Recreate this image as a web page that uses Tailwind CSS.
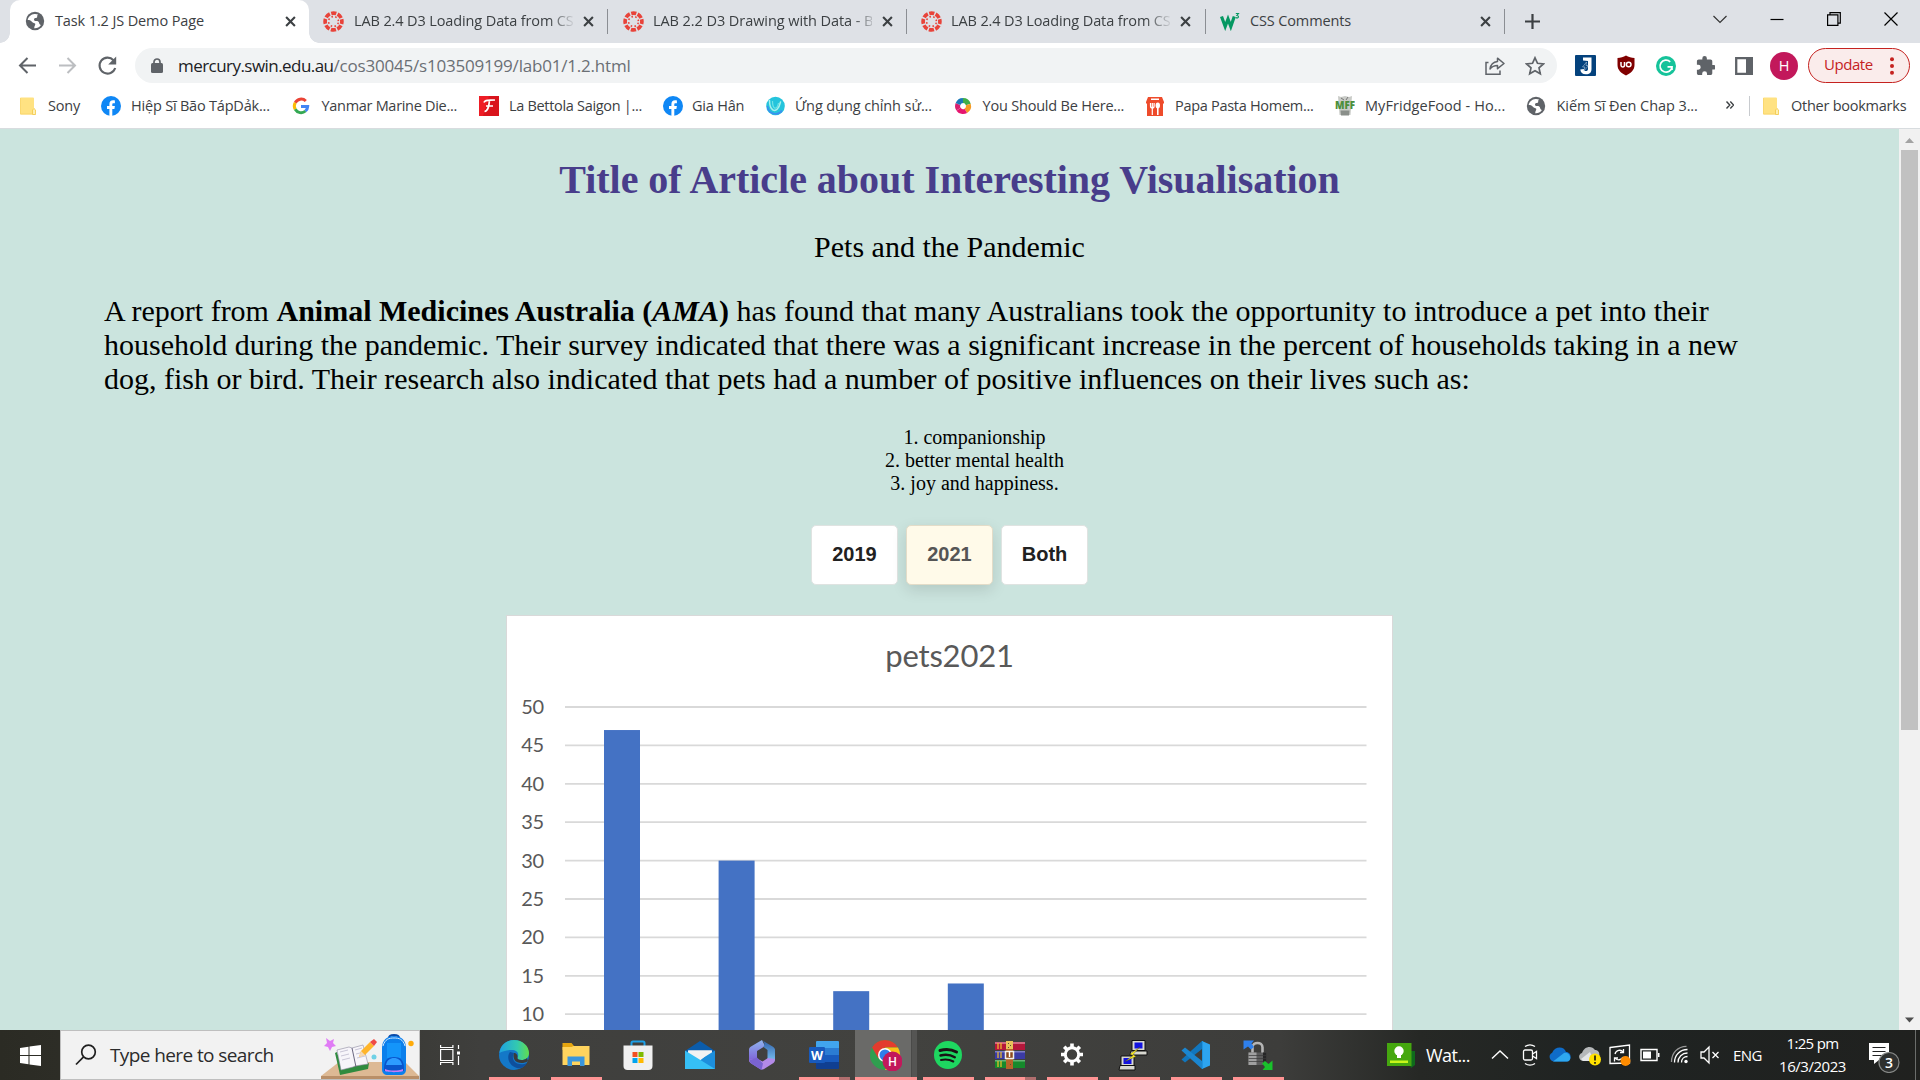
<!DOCTYPE html>
<html lang="en">
<head>
<meta charset="utf-8">
<title>Task 1.2 JS Demo Page</title>
<script src="https://cdn.jsdelivr.net/npm/@tailwindcss/browser@4"></script>
</head>
<body class="w-[1920px] h-[1080px] overflow-hidden bg-white font-['Open_Sans',sans-serif]">

<!-- shared icons -->
<svg class="hidden">
  <symbol id="globe" viewBox="0 0 20 20"><circle cx="10" cy="10" r="9.2" fill="#5f6368"/><path d="M9.5 2.9C6 3.2 3.2 5.6 2.7 9c2.300 0 3.300.6 4.300 1.900 1 1.200 2.600.6 3.200 1.800.5 1.200-.9 1.700-1 4.500 2.600.2 5.300-.9 6.700-3.300-1-.3-1.500-.9-1.800-2-.3-1.300-1.200-1.800-3-1.800-1.300 0-2.200-.6-2.100-1.900.1-1.100 1-1.300 2-1.300 1.300 0 1.300-1 1.200-1.700-.1-.8.400-1.300 1-1.700-1.100-.5-2.400-.700-3.700-.6Z" fill="#fff"/></symbol>
  <symbol id="canvas" viewBox="0 0 20 20"><g fill="none" stroke="#e8433a"><circle cx="10" cy="10" r="8" stroke-width="3.500" stroke-dasharray="4.900 1.383" stroke-dashoffset="2.450"/><circle cx="10" cy="10" r="4.700" stroke-width="1.500" stroke-dasharray="1.500 2.191" stroke-dashoffset="2.600"/></g></symbol>
  <symbol id="close" viewBox="0 0 10 10"><path d="M1 1l8 8M9 1l-8 8" stroke="#3c4043" stroke-width="1.900" fill="none"/></symbol>
  <symbol id="fb" viewBox="0 0 20 20"><circle cx="10" cy="10" r="10" fill="#0f87f5"/><path d="M8.400 20v-6.900H6v-3h2.400V8.300c0-2.700 1.300-4 3.700-4 .9 0 1.400.1 1.800.2v2.700h-1.300c-1 0-1.300.5-1.300 1.400v1.500h2.600l-.5 3h-2.100V20Z" fill="#fff"/></symbol>
  <symbol id="folder" viewBox="0 0 16 18"><path d="M1 .5h12a1 1 0 0 1 1 1V12l1.500 1v3.500a1 1 0 0 1-1 1H1a1 1 0 0 1-1-1v-15a1 1 0 0 1 1-1Z" fill="#ffe282"/><path d="M12.500 17.500v-4.500l1.500-1.500 1.600 1.500v4.500Z" fill="#fff0b3" stroke="#f2c744" stroke-width=".8"/><path d="M.4 1v16h12" fill="none" stroke="#f8d368" stroke-width=".8"/></symbol>
</svg>

<!-- tab strip -->
<header class="flex h-[43px] bg-[#dee1e6] pl-[10px] text-[14.5px] text-[#3c4043]">
  <div class="relative flex w-[299px] items-center rounded-t-[10px] bg-white pl-[15px] pb-px">
    <span class="absolute bottom-0 -left-[10px] h-[10px] w-[10px] bg-[radial-gradient(circle_at_0_0,#dee1e6_9.500px,#fff_10px)]"></span>
    <span class="absolute bottom-0 -right-[10px] h-[10px] w-[10px] bg-[radial-gradient(circle_at_100%_0,#dee1e6_9.500px,#fff_10px)]"></span>
    <svg class="size-5"><use href="#globe"/></svg>
    <span class="ml-[10px] w-[219px] whitespace-nowrap tracking-[-0.118px]">Task 1.2 JS Demo Page</span>
    <svg class="ml-[10.500px] size-[11px]"><use href="#close"/></svg>
  </div>
  <div class="flex w-[299px] items-center pl-[15px] pb-px">
    <svg class="-ml-px size-[21px]"><use href="#canvas"/></svg>
    <span class="ml-[10px] w-[219px] overflow-hidden whitespace-nowrap tracking-[-0.12px] mask-[linear-gradient(to_right,#000_195px,transparent_222px)]">LAB 2.4 D3 Loading Data from CSV</span>
    <svg class="ml-[10px] size-[11px]"><use href="#close"/></svg>
    <span class="ml-auto h-[25px] w-px bg-[#8b8e93]"></span>
  </div>
  <div class="flex w-[299px] items-center pl-[15px] pb-px">
    <svg class="size-[21px]"><use href="#canvas"/></svg>
    <span class="ml-[9px] w-[219px] overflow-hidden whitespace-nowrap tracking-[-0.07px] mask-[linear-gradient(to_right,#000_201px,transparent_224px)]">LAB 2.2 D3 Drawing with Data - Bar</span>
    <svg class="ml-[10px] size-[11px]"><use href="#close"/></svg>
    <span class="ml-auto h-[25px] w-px bg-[#8b8e93]"></span>
  </div>
  <div class="flex w-[299px] items-center pl-[14px] pb-px">
    <svg class="size-[21px]"><use href="#canvas"/></svg>
    <span class="ml-[9px] w-[219px] overflow-hidden whitespace-nowrap tracking-[-0.12px] mask-[linear-gradient(to_right,#000_195px,transparent_222px)]">LAB 2.4 D3 Loading Data from CSV</span>
    <svg class="ml-[10px] size-[11px]"><use href="#close"/></svg>
    <span class="ml-auto h-[25px] w-px bg-[#8b8e93]"></span>
  </div>
  <div class="flex w-[299px] items-center pl-[14px] pb-px">
    <svg class="size-5" viewBox="0 0 20 20" fill="none" stroke="#059862"><path d="M1.500 5.500l3.700 10L8 8l2.800 7.500 3.500-10" stroke-width="3.200"/><path d="M15.800 2.500h2.700l-1.600 2c1.100 0 1.600.5 1.600 1.300 0 1.100-1.500 1.500-2.700.7" stroke-width="1.100"/></svg>
    <span class="ml-[10px] w-[219px] whitespace-nowrap tracking-[-0.135px]">CSS Comments</span>
    <svg class="ml-[10.500px] size-[11px]"><use href="#close"/></svg>
    <span class="ml-auto h-[25px] w-px bg-[#8b8e93]"></span>
  </div>
  <svg class="mt-[14px] ml-[20px] size-[15px]" viewBox="0 0 15 15" stroke="#3c4043" stroke-width="2.200"><path d="M7.500 0v15M0 7.500h15"/></svg>
  <div class="ml-auto flex items-center gap-[43px] pr-[22px] pb-[6px] text-black">
    <svg class="h-[14px] w-[14px]" viewBox="0 0 14 14" fill="none" stroke="#333" stroke-width="1.200"><path d="M.5 4L7 10.500 13.500 4"/></svg>
    <svg class="h-[14px] w-[14px]" viewBox="0 0 14 14" stroke="#000" stroke-width="1.200"><path d="M.5 7.500h13"/></svg>
    <svg class="h-[14px] w-[14px]" viewBox="0 0 14 14" fill="none" stroke="#000" stroke-width="1.200"><path d="M.6 2.800h10.300v10.500H.6zM3 2.600V.6h10.300v10.500H11"/></svg>
    <svg class="h-[14px] w-[14px]" viewBox="0 0 14 14" stroke="#000" stroke-width="1.200"><path d="M.5.5l13 13M13.500.5l-13 13"/></svg>
  </div>
</header>

<!-- toolbar -->
<nav class="flex h-[45px] items-center pl-[17px] pr-[10px]">
  <svg class="size-[21px]" viewBox="0 0 21 21" fill="none" stroke="#5f6368" stroke-width="2"><path d="M19 10.500H3M10.500 3L3 10.500l7.500 7.500"/></svg>
  <svg class="ml-[19px] size-[21px]" viewBox="0 0 21 21" fill="none" stroke="#bcbec1" stroke-width="2"><path d="M2 10.500h16M10.500 3l7.500 7.500-7.500 7.500"/></svg>
  <svg class="ml-[19px] size-[21px]" viewBox="0 0 21 21"><path d="M16.500 5.200A8 8 0 1 0 18.200 13" fill="none" stroke="#5f6368" stroke-width="2.100"/><path d="M19.200 1.500v8h-8z" fill="#5f6368"/></svg>
  <div class="ml-[17px] flex h-[35px] w-[1422px] items-center rounded-full bg-[#f1f3f4] pl-[16px] text-[17px]">
    <svg class="h-[15px] w-[12px]" viewBox="0 0 12 15"><rect y="5" width="12" height="10" rx="1.500" fill="#5f6368"/><path d="M3 6V4a3 3 0 0 1 6 0v2" fill="none" stroke="#5f6368" stroke-width="1.700"/></svg>
    <span class="ml-[15px] whitespace-nowrap text-[#202124] tracking-[-0.548px]">mercury.swin.edu.au</span><span class="whitespace-nowrap text-[#6b6f74] tracking-[-0.2px]">/cos30045/s103509199/lab01/1.2.html</span>
    <svg class="ml-auto h-[18px] w-[20px]" viewBox="0 0 20 18" fill="none" stroke="#5f6368" stroke-width="1.500"><path d="M3.500 5.500H1v11.700h14v-3.700"/><path d="M12.500 1.200L19 6.500l-6.500 5.200V8.500c-3.500 0-5.700 1.200-7.500 3.500.6-4.200 3-7 7.500-7.500z" stroke-linejoin="round"/></svg>
    <svg class="ml-[20px] mr-[12px] size-[20px]" viewBox="0 0 20 20" fill="none" stroke="#5f6368" stroke-width="1.700"><path d="M10 1.800l2.500 5.500 6 .6-4.500 4 1.300 5.900L10 14.700l-5.300 3.100L6 11.900l-4.500-4 6-.6z"/></svg>
  </div>
  <svg class="ml-[18px] size-[21px]" viewBox="0 0 21 21"><rect width="21" height="21" rx="1" fill="#04427d"/><path d="M8 2.500l8.500 0V14c0 3.700-1.800 5.200-5.600 5.200-3.500 0-5.400-1.700-5.600-4.800l3.500-.5c0 1.500.7 2.100 2 2.100 1.500 0 2.200-.8 2.200-2.300V6L8 5.500z" fill="#fff"/><path d="M11.500 7l-4 5h2.500l-1.500 4.500 5-6H11z" fill="#04427d" stroke="#fff" stroke-width=".4"/></svg>
  <svg class="ml-[21px] h-[21px] w-[18px]" viewBox="0 0 18 21"><path d="M9 .5c2.500 1.400 5.500 2.300 8.500 2.500v7c0 5-3.500 8-8.500 10.500C4 18 .5 15 .5 10V3C3.500 2.800 6.500 1.900 9 .5z" fill="#800000"/><g fill="none" stroke="#fff" stroke-width="1.500"><path d="M4 7v3.200c0 1.100.6 1.700 1.700 1.700s1.800-.6 1.800-1.700V7"/><circle cx="11.700" cy="9.500" r="2.300"/></g></svg>
  <svg class="ml-[20.500px] size-[20px]" viewBox="0 0 20 20"><circle cx="10" cy="10" r="10" fill="#15c39a"/><path d="M14.200 5.800A6 6 0 1 0 16 10.800H11.500M13.300 10.800H16V14" fill="none" stroke="#fff" stroke-width="1.700"/></svg>
  <svg class="ml-[20.500px] size-[19px]" viewBox="1 1 21 21"><path fill="#5f6368" d="M20.500 11H19V7c0-1.100-.9-2-2-2h-4V3.500a2.500 2.500 0 0 0-5 0V5H4c-1.100 0-2 .9-2 2v3.800h1.500a2.700 2.700 0 0 1 0 5.400H2V20c0 1.100.9 2 2 2h3.800v-1.500a2.700 2.700 0 0 1 5.400 0V22H17c1.100 0 2-.9 2-2v-4h1.500a2.500 2.500 0 0 0 0-5z"/></svg>
  <svg class="ml-[20px] size-[18px]" viewBox="0 0 18 18"><path d="M1.200 1.200h15.600v15.600H1.200z" fill="none" stroke="#5f6368" stroke-width="2.300"/><path d="M11 0h7v18h-7z" fill="#5f6368"/></svg>
  <span class="ml-[17px] flex size-[28px] items-center justify-center rounded-full bg-[#c2185b] text-[14.5px] text-white">H</span>
  <span class="ml-auto flex h-[35px] w-[102px] items-center justify-between rounded-full border-[1.500px] border-[#c5221f] bg-[#faeceb] pl-[15px] pr-[15px] text-[15px] text-[#c5221f]"><span class="-mt-[2px] tracking-[-0.45px]">Update</span>
    <svg class="h-[18px] w-[4px]" viewBox="0 0 4 18" fill="#c5221f"><circle cx="2" cy="2.200" r="2"/><circle cx="2" cy="9" r="2"/><circle cx="2" cy="15.800" r="2"/></svg>
  </span>
</nav>

<!-- bookmarks bar -->
<nav class="flex h-[41px] items-center border-b border-[#d8dcdf] pb-[4px] pl-[17.5px] text-[14.5px] whitespace-nowrap text-[#3c4043]">
  <div class="flex w-[83px] items-center gap-[10.500px]"><svg class="h-[18px] w-5" viewBox="0 0 20 18"><use href="#folder" x="2" width="16" height="18"/></svg><span class="tracking-[-0.2px]">Sony</span></div>
  <div class="flex w-[190.500px] items-center gap-[10.500px]"><svg class="size-5"><use href="#fb"/></svg><span class="tracking-[-0.2px]">Hiệp Sĩ Bão TápDảk...</span></div>
  <div class="flex w-[187.500px] items-center gap-[10.500px]"><svg class="size-5" viewBox="0 0 20 20" fill="none" stroke-width="3"><path d="M14.800 5A6.700 6.700 0 0 0 4.200 6.700" stroke="#ea4335"/><path d="M4.200 6.700a6.700 6.700 0 0 0 0 6.600" stroke="#fbbc05"/><path d="M4.200 13.300A6.700 6.700 0 0 0 14.500 15" stroke="#34a853"/><path d="M14.500 15a6.700 6.700 0 0 0 2.200-4.600H10" stroke="#4285f4"/></svg><span class="tracking-[-0.3px]">Yanmar Marine Die...</span></div>
  <div class="flex w-[184px] items-center gap-[10.500px]"><svg class="size-5" viewBox="0 0 20 20"><path d="M0 0h20v20H0z" fill="#d9141c"/><path d="M0 0h10L4 20H0z" fill="#ee1c25"/><path d="M5 6.500C6 3.500 9 4.500 16 4M10.500 4.500C10 9 9.500 15 5.500 15.500M7 10h7" fill="none" stroke="#fff" stroke-width="1.700"/></svg><span class="tracking-[-0.308px]">La Bettola Saigon |...</span></div>
  <div class="flex w-[103px] items-center gap-[9.500px]"><svg class="size-5"><use href="#fb"/></svg><span class="tracking-[-0.2px]">Gia Hân</span></div>
  <div class="flex w-[187px] items-center gap-[9.500px]"><svg class="size-5" viewBox="0 0 20 20"><circle cx="9.500" cy="10" r="9.300" fill="#24c4dc"/><path d="M1.500 10a8 8 0 0 0 14.500 4.500" fill="none" stroke="#3d8df0" stroke-width="1.500"/><path d="M3.500 4.500c0 4 1 8 3.500 9.500 3 1.500 6-1.500 7.500-8" fill="none" stroke="#a9f0ec" stroke-width="1.500" stroke-linecap="round"/><path d="M6.500 5c0 3 .5 6 2 7 2 1 3.500-2 4-5" fill="none" stroke="#6fe3e6" stroke-width="1.200"/></svg><span class="tracking-[-0.1px]">Ứng dụng chỉnh sử...</span></div>
  <div class="flex w-[192px] items-center gap-[10px]"><svg class="size-5" viewBox="0 0 20 20" fill="none" stroke-width="5"><path d="M10 4.500A5.500 5.500 0 0 1 15.300 8.500" stroke="#3fae49"/><path d="M15.300 8.500A5.500 5.500 0 0 1 12.800 14.800" stroke="#f59a23"/><path d="M12.800 14.800A5.500 5.500 0 0 1 5.500 13.200" stroke="#e6156f"/><path d="M5.500 13.200A5.500 5.500 0 0 1 5 8" stroke="#d9206f"/><path d="M5 8A5.500 5.500 0 0 1 10 4.500" stroke="#1a78b8"/></svg><span class="tracking-[-0.2px]">You Should Be Here...</span></div>
  <div class="flex w-[190px] items-center gap-[10.500px]"><svg class="size-5" viewBox="0 0 20 20"><path d="M3 1h14l2 5v1.500h-1V20H2V7.500H1V6z" fill="#ee4b2b"/><path d="M6 2.500h8v1.500H6z" fill="#fff"/><path d="M5.500 7v3c0 1.500 1 2 1.800 2s1.800-.5 1.800-2V7M7.300 7v12" stroke="#fff" stroke-width="1.200" fill="none"/><ellipse cx="12.800" cy="9.500" rx="2.200" ry="3" fill="#fff"/><path d="M12.800 10v9" stroke="#fff" stroke-width="1.600"/></svg><span class="tracking-[-0.29px]">Papa Pasta Homem...</span></div>
  <div class="flex w-[191.500px] items-center gap-[10.500px]"><svg class="size-5" viewBox="0 0 20 20"><path d="M3 0l3 1 4-1 4 1 3-1-1.500 19h-11z" fill="#c9cbc7"/><path d="M5.500 14.500h9l-.5 5H6z" fill="#8a8f8a"/><path d="M6 2l3 2M13 1l-2 3" stroke="#777" stroke-width="1"/><text x="10" y="13.200" text-anchor="middle" textLength="20" lengthAdjust="spacingAndGlyphs" font-size="10" font-weight="800" fill="#4c8f3c">MFF</text></svg><span class="tracking-[0.06px]">MyFridgeFood - Ho...</span></div>
  <div class="flex w-[197.500px] items-center gap-[10.500px]"><svg class="size-5"><use href="#globe"/></svg><span class="tracking-[-0.08px]">Kiếm Sĩ Đen Chap 3...</span></div>
  <svg class="size-[10px] mt-[-2px]" viewBox="0 0 10 10" fill="none" stroke="#3c4043" stroke-width="1.400"><path d="M2.500 1.500L5.800 5 2.500 8.500M6.300 1.500L9.600 5 6.300 8.500"/></svg>
  <span class="ml-[15px] h-5 w-px bg-[#c8cbcf]"></span>
  <div class="ml-[11px] flex items-center gap-[10.500px]"><svg class="h-[18px] w-5" viewBox="0 0 20 18"><use href="#folder" x="2" width="16" height="18"/></svg><span class="tracking-[-0.25px]">Other bookmarks</span></div>
</nav>

<!-- page viewport -->
<div class="flex h-[901px] overflow-hidden">
  <main class="flex h-full w-[1899px] flex-col items-center overflow-hidden bg-[#cbe4de] pt-[28px] font-['Liberation_Serif',serif] text-black">
    <h1 class="text-[40px] leading-[46px] font-bold tracking-[-0.03px] text-[#483d8b]">Title of Article about Interesting Visualisation</h1>
    <p class="mt-[27px] text-[30px] leading-[34px]">Pets and the Pandemic</p>
    <p class="mt-[30px] w-[1691px] text-[30px] leading-[34px]">A report from <b>Animal Medicines Australia (<i>AMA</i>)</b> has found that many Australians took the opportunity to introduce a pet into their household during the pandemic. Their survey indicated that there was a significant increase in the percent of households taking in a new dog, fish or bird. Their research also indicated that pets had a number of positive influences on their lives such as:</p>
    <ol class="mt-[30px] list-inside list-decimal pl-[50px] text-center text-[20px] leading-[23px]">
      <li>companionship</li>
      <li>better mental health</li>
      <li>joy and happiness.</li>
    </ol>
    <div class="mt-[30px] flex gap-[8px] font-['Liberation_Sans',sans-serif] text-[20px] font-bold text-[#212121]">
      <button class="h-[60px] w-[87px] rounded-[5px] border border-[#dfe3e1] bg-white pb-[3px]">2019</button>
      <button class="h-[60px] w-[87px] rounded-[5px] border border-[#e3dcc8] bg-[#fffae9] pb-[3px] text-[#555] shadow-[0_5px_15px_rgba(0,0,0,0.120)]">2021</button>
      <button class="h-[60px] w-[87px] rounded-[5px] border border-[#dfe3e1] bg-white pb-[3px]">Both</button>
    </div>
    <svg id="chart" class="mt-[30px] h-[560px] w-[887px] shrink-0 border border-[#d9d9d9] bg-white font-['Lato',sans-serif]" viewBox="507 616 885 558" fill="#595959"></svg>
  </main>
  <aside class="flex w-[21px] flex-col items-center bg-[#f1f1f1]">
    <svg class="h-[21px] w-[21px]" viewBox="0 0 21 21"><path d="M6 14l4.500-5 4.500 5z" fill="#a3a3a3"/></svg>
    <div class="h-[580px] w-[17px] bg-[#c1c1c1]"></div>
    <svg class="mt-auto h-[21px] w-[21px]" viewBox="0 0 21 21"><path d="M6 8.500l4.500 5 4.500-5z" fill="#505050"/></svg>
  </aside>
</div>

<!-- taskbar -->
<footer class="flex h-[50px] bg-[linear-gradient(to_right,#2b2b24_0,#35352f_300px,#3f3f3d_480px,#42423f_900px,#3d3d3b_1280px,#262825_1420px,#1f2322_1600px,#20211f_1920px)] text-white">
  <div class="flex w-[60px] items-center pl-[20px]">
    <svg class="size-[21px]" viewBox="0 0 21 21" fill="#fff"><path d="M0 3l8.500-1.200v8.200H0zM9.500 1.600L21 0v10H9.500zM0 11h8.500v8.200L0 18zM9.500 11H21v10L9.500 19.400z"/></svg>
  </div>
  <div class="flex w-[360px] items-center border border-[#bfbfbf] bg-[#f2f2f2] pl-[14px]">
    <svg class="size-[22px]" viewBox="0 0 22 22" fill="none" stroke="#1f1f1f" stroke-width="1.700"><circle cx="13.500" cy="8" r="6.800"/><path d="M8.600 12.800L1 20.500"/></svg>
    <span class="ml-[13px] text-[19px] tracking-[-0.6px] whitespace-nowrap text-[#2b2b2b]">Type here to search</span>
    <svg class="ml-auto h-[48px] w-[98px]" viewBox="12 1 98 48">
      <path d="M30 32h66l14 14H12z" fill="#ddb994"/><path d="M12 46h98v3H12z" fill="#b98f68"/>
      <path d="M17 8l4 3 4-2-1 4 3 3-4 1-2 4-2-4-4-1 3-3z" fill="#e07bf5"/><circle cx="102" cy="13.500" r="2.700" fill="#ffab0a"/><circle cx="65" cy="27" r="2.500" fill="#6fd1e6"/>
      <path d="M26 23l5 22 28-6 1-6-27 6-5-17z" fill="#2f8b3e"/><path d="M28 20l12-3 3 1 11-3 5 19-13 2-2 1-12 3z" fill="#f7f5fa" stroke="#8d8aa0" stroke-width=".6"/><path d="M43 18l4 19" stroke="#6a6780" stroke-width="1"/><path d="M31 22l8-2M32 26l8-2M33 30l8-2M46 20l7-2M47 24l8-2M48 28l8-2" stroke="#c9c6d6" stroke-width="1"/>
      <path d="M50 27l2-6 9-9 4 4-9 9z" fill="#ffb52b"/><path d="M61 12l4 4 3-4-3-3z" fill="#ef4b45"/><path d="M50 27l2-6 4 4z" fill="#f5d9b5"/>
      <path d="M80 8c0-4 10-4 10 0" fill="none" stroke="#0a4aa8" stroke-width="2"/><path d="M73 18c0-8 5-12 12-12s12 4 12 12v21c0 4-2 6-6 6H79c-4 0-6-2-6-6z" fill="#0b7fec"/><path d="M74 16c2-7 6-8 11-8s9 1 11 8" fill="none" stroke="#cfe7ff" stroke-width="1"/><path d="M78 13h14v15H78z" fill="#1495fa"/><path d="M75 38c0-8 4-11 10-11s10 3 10 11v3H75z" fill="#0a55cc"/><path d="M77 35c1-5 4-7 8-7s7 2 8 7z" fill="#2d9bff"/><path d="M76 39c5 2 13 2 18 0v2c-2 1.500-16 1.500-18 0z" fill="#c77df5"/>
    </svg>
  </div>
  <div class="flex w-[63.500px] items-center justify-center pr-[4px]">
    <svg class="h-5 w-5" viewBox="0 0 20 20" fill="none" stroke="#fff" stroke-width="1.200"><path d="M.6 4.500h12.300v11H.6zM.6 0v2.500h12.300V0M.6 20v-2.500h12.300V20M18.500 0v4M18.500 11v9"/><path d="M17 6.500h3v3h-3z" fill="#fff" stroke="none"/></svg>
  </div>
  <div class="grid w-[805.500px] grid-cols-13 [&>div]:flex [&>div]:flex-col [&>div]:items-center [&>div]:justify-between [&>div>svg]:size-[32px] [&>div>svg]:mt-[9px] [&>div>svg]:-ml-px [&>div>i]:h-[3px] [&>div>i]:w-[51px] [&>div>i]:bg-[#ff9494]">
    <div><svg viewBox="0 0 32 32"><defs><linearGradient id="eg" x1="0" x2="1"><stop offset="0" stop-color="#1fa2e0"/><stop offset=".6" stop-color="#33c9b0"/><stop offset="1" stop-color="#62de4d"/></linearGradient></defs><circle cx="16" cy="16" r="15" fill="#1478c8"/><path d="M1.500 14C2 6.500 8 1 16 1c8.500 0 15 6 15 13 0 5-4 7-7.500 7-3 0-4.500-1-4-2.500 1.500-2 1-7-4.500-7.500-6-.5-11 1.500-13.500 3z" fill="url(#eg)"/><path d="M12 13c-4 5-1 14 7 16 4 1 8-1 10-5-4 2-10 2-13-2-2-3-1-6 0-8z" fill="#0e4f9c"/><path d="M16 14c2 0 4 2 3.500 4.500-.5 1.500 1 2.500 4 2.500 2 0 4-.5 5.500-2l1 3c-4 3-11 2.500-13-.5-1.500-2.500-2-5-1-7.500z" fill="#3b3b3a"/></svg><i></i></div>
    <div><svg viewBox="0 0 32 32"><path d="M2.500 4h9l2.500 3h15v4h-26.500z" fill="#e5a50f"/><path d="M2.500 8h9l2-1H29.500V26h-27z" fill="#ffd45e"/><path d="M7.500 27V17.500h17V27h-4.500v-4.500h-8V27z" fill="#3a96dd"/></svg><i></i></div>
    <div><svg viewBox="0 0 32 32"><path d="M9.500 8V4c0-1 .5-1.500 1.500-1.500h10c1 0 1.500.5 1.500 1.500v4" fill="none" stroke="#1ca0e8" stroke-width="2"/><path d="M1.500 6.500h29V27c0 2.500-1.500 4-4 4h-21c-2.500 0-4-1.500-4-4z" fill="#f0f0f0"/><path d="M10.500 13h5v5h-5z" fill="#f25022"/><path d="M16.500 13h5v5h-5z" fill="#7fba00"/><path d="M10.500 19h5v5h-5z" fill="#00a4ef"/><path d="M16.500 19h5v5h-5z" fill="#ffb900"/></svg></div>
    <div><svg viewBox="0 0 32 32"><path d="M1 12L16 2l15 10v6H1z" fill="#0b5cab"/><path d="M4 11.500h24v6L16 24 4 17z" fill="#f3f3f3"/><path d="M31 11.500v18.500H1z" fill="#1d8fdc"/><path d="M4 11.500h24L16 21.500z" fill="#f3f3f3"/><path d="M1 11.500L31 30H1z" fill="#36bff5"/></svg></div>
    <div><svg viewBox="0 0 32 32"><defs><linearGradient id="m1" x1="0" y1="0" x2="0" y2="1"><stop offset="0" stop-color="#8fb4ee"/><stop offset="1" stop-color="#7f62d8"/></linearGradient><linearGradient id="m2" x1="0" y1="0" x2="0" y2="1"><stop offset="0" stop-color="#2f5fa8"/><stop offset="1" stop-color="#7cc4f5"/></linearGradient></defs><path d="M16 1L5 7.500C3.500 8.500 3 9.500 3 11v11l8-2v-8l8-5z" fill="url(#m1)"/><path d="M15.500 1c5 3 2 6 2 7l4 3V20l6 3c1-1 1.500-2 1.500-3.500V11c0-1.500-.8-2.500-2-3.300z" fill="url(#m2)"/><path d="M3 21c0 1.500.8 2.500 2 3.200l9 5.800c1.500.8 2.500.8 4 0l9.500-6c1-1 1.500-2 1.500-4l-7-1-5.500 3.500-5.500-3z" fill="#b48ae8"/><path d="M3 21.500l8-3 6 6-1.500 6.500-10.500-6.500z" fill="#7a63d0"/></svg></div>
    <div><svg viewBox="0 0 32 32"><path d="M9 2h21a1 1 0 0 1 1 1v6H8V3a1 1 0 0 1 1-1z" fill="#41a5ee"/><path d="M8 9h23v7H8z" fill="#2b7cd3"/><path d="M8 16h23v7H8z" fill="#185abd"/><path d="M8 23h23v6a1 1 0 0 1-1 1H9a1 1 0 0 1-1-1z" fill="#103f91"/><rect x="1" y="8" width="16" height="16" rx="1.300" fill="#185abd"/><text x="9" y="20.500" text-anchor="middle" font-size="12.500" font-weight="700" fill="#fff">W</text></svg><i class="bg-[linear-gradient(to_right,#ff9494_40px,#b06e6e_40px)]"></i></div>
    <div class="bg-[linear-gradient(to_right,#6a6a68_56px,#4a4a48_56px,#4a4a48_57px,#555553_57px)]"><svg viewBox="0 0 32 32"><circle cx="15" cy="16" r="15" fill="#2f9e4f"/><path d="M2 8.500A15 15 0 0 1 28 8.500H15l-6.500 11z" fill="#e33b2e"/><path d="M28 8.500A15 15 0 0 1 15 31l6.500-11.500L15 8.500z" fill="#fbc116"/><circle cx="15" cy="16" r="7" fill="#fff"/><circle cx="15" cy="16" r="5.500" fill="#2f7de9"/><circle cx="22.500" cy="22.500" r="10" fill="#c2185b"/><text x="22.500" y="27" text-anchor="middle" font-size="12" font-weight="600" fill="#fff">H</text></svg><i class="!w-full"></i></div>
    <div><svg viewBox="0 0 32 32"><circle cx="16" cy="16" r="14" fill="#1ed760"/><g fill="none" stroke="#191414" stroke-linecap="round"><path d="M8 11.500c5.500-1.700 12-1 16.500 1.500" stroke-width="3"/><path d="M8.500 16.500c5-1.300 10-.8 14.300 1.700" stroke-width="2.400"/><path d="M9 21c4.500-1 8.500-.6 12.300 1.500" stroke-width="2"/></g></svg><i></i></div>
    <div><svg viewBox="0 0 32 32"><path d="M1 3h30v8H1z" fill="#b5173b"/><path d="M1 12h30v8H1z" fill="#3b3ba5"/><path d="M1 21h30v8H1z" fill="#168a2c"/><path d="M1 3h30v2H1zM1 12h30v1.500H1zM1 21h30v1.500H1z" fill="#fff" fill-opacity=".35"/><path d="M4 4v6M7 4v6M4 13v6M7 13v6M4 22v6M7 22v6" stroke="#f2c22e" stroke-width="1.200"/><path d="M12 2h7v28h-7z" fill="#b5642a"/><path d="M12 2h7v8h-7z" fill="#e9c25a"/><path d="M14 4h1v1h-1zM16 6h1v1h-1zM14 8h1v1h-1zM16 25h1v1h-1z" fill="#553"/><path d="M11.500 12.500h8v7h-8z" fill="#8d4a1e" stroke="#f0f0e8" stroke-width="1.500"/><path d="M15.500 12v6" stroke="#fff" stroke-width="1.500"/></svg><i class="bg-[linear-gradient(to_right,#ff9494_40px,#b06e6e_40px)]"></i></div>
    <div><svg viewBox="0 0 32 32"><g transform="translate(16 15.500)" stroke="#fff"><circle r="6.700" fill="none" stroke-width="3"/><path d="M0-11v4M0 7v4M-11 0h4M7 0h4M-7.800-7.800L-5-5M5 5l2.800 2.800M-7.800 7.800L-5 5M5-5l2.800-2.800" stroke-width="3.600"/></g></svg><i></i></div>
    <div><svg viewBox="0 0 32 32"><path d="M14 1.500h13v10H14z" fill="#d8d8d0" stroke="#111"/><path d="M16.500 3.500h8v6h-8z" fill="#1212e0"/><path d="M13 12h16v4H12z" fill="#d8d8d0" stroke="#111"/><path d="M3 17h13v9.500H3z" fill="#d8d8d0" stroke="#111"/><path d="M5.500 19h8v6h-8z" fill="#1212e0"/><path d="M2 26.500h15V31H1z" fill="#d8d8d0" stroke="#111"/><path d="M22 8l-10 7 3 1.500-8 6 11-5-3-2z" fill="#ffee20" stroke="#443" stroke-width=".4"/></svg><i></i></div>
    <div><svg viewBox="0 0 32 32"><path d="M22 2l8 3.500v21L22 30z" fill="#2da4f0"/><path d="M22 2v8L5 23.500l-3.500-3z" fill="#1176bd"/><path d="M22 30v-8L5 8.500l-3.500 3z" fill="#1b86d0"/><path d="M22 2l1 0v28l-1 0z" fill="#1f93e0"/></svg><i></i></div>
    <div><svg viewBox="0 0 32 32"><path d="M10.500 14V8.500c0-6 10-6 10 0V14" fill="none" stroke="#b5b5b5" stroke-width="2.600"/><rect x="6.500" y="13.500" width="18" height="12.500" fill="#5c5c5c"/><rect x="6.500" y="13.500" width="8" height="12.500" fill="#a0a0a0"/><rect x="21" y="13.500" width="3.500" height="12.500" fill="#262626"/><path d="M6.500 16.500h18M6.500 19.500h18M6.500 22.500h18" stroke="#3a3a3a" stroke-width=".7"/><path d="M1.500 1.500H12L9.500 4.500 12 8l-3 2.500-3-3-4.500 3z" fill="#2f80ec"/><path d="M30.500 31H20.500l2.500-3-3-3.500 3-2.500 3.500 3 4-3.500z" fill="#19c22b"/></svg><i></i></div>
  </div>
  <div class="ml-[98px] flex w-[98px] items-center">
    <svg class="h-[28px] w-[28px]" viewBox="0 0 28 28"><path d="M18 10h10v14l-4 3z" fill="#0f6b1c"/><path d="M0 2h24.500v23H0z" fill="#45a70f"/><circle cx="12" cy="10" r="4.700" fill="#fff"/><path d="M10 13h4v4h-4z" fill="#fff"/><path d="M3 19.500h18v2.500H3z" fill="#c8f51a"/></svg>
    <span class="ml-[11px] text-[18px] tracking-[-0.539px]">Wat...</span>
  </div>
  <div class="grid w-[240px] grid-cols-8 place-items-center [&>svg]:size-[22px]">
    <svg viewBox="0 0 22 22" fill="none" stroke="#fff" stroke-width="1.400"><path d="M3 14.500L11 7l8 7.500"/></svg>
    <svg viewBox="0 0 22 22" fill="none" stroke="#fff" stroke-width="1.300"><rect x="4.500" y="6" width="9" height="10" rx="1.500"/><path d="M13.500 10l4-2.500v7l-4-2.500M6 2.500C9 .5 13 .5 16 2.500M6 19.500c3 2 7 2 10 0"/></svg>
    <svg viewBox="0 0 22 22"><path d="M3 9C6 2 15 2 17 8c6 0 6 9 1 9.500H5C-.5 17-.5 10 3 9z" fill="#0f6cc9"/><path d="M4 17.500L15 9c6-2 9 8 3 8.500z" fill="#2ea8f0"/></svg>
    <svg viewBox="0 0 22 22"><path d="M3 9C5 2 13 1 16 6c4 0 5 4 4 6l-5 5H4c-5-1-5-7-1-8z" fill="#b5b8ba"/><path d="M2 15l9-7 4 9H4z" fill="#e4e6e7"/><circle cx="16" cy="15.500" r="6" fill="#ffe100"/><path d="M16 11.500v5M16 18v1.800" stroke="#111" stroke-width="1.600"/></svg>
    <svg viewBox="0 0 22 22" fill="none" stroke="#fff" stroke-width="1.300"><path d="M1 3.500L20.500 1v18L1 19.500zM6 10c1-4 6-5 8-2M14.500 5v3.500H11M14 13c-1 3-6 4-8 1M5.500 17.500V14H9"/><circle cx="16.500" cy="17" r="5" fill="#ff8c00" stroke="none"/></svg>
    <svg viewBox="0 0 22 22"><path d="M2 5.500h16v11H2z" fill="none" stroke="#fff" stroke-width="1.400"/><path d="M4 7.500h8v7H4zM19 9h1.500v4H19z" fill="#fff"/></svg>
    <svg viewBox="0 0 22 22" fill="none" stroke="#fff" stroke-width="1.300"><path d="M5.500 18.500C5.500 11 11 5.500 18.500 5.500M9 18.500C9 13 13 9 18.500 9M12.500 18.500C12.500 15 15 12.500 18.500 12.500" /><path d="M2.500 18C2.500 8.500 9 2.500 17.500 2.300" stroke="#999"/><circle cx="17" cy="17.500" r="1.700" fill="#fff" stroke="none"/></svg>
    <svg viewBox="0 0 22 22" fill="none" stroke="#fff" stroke-width="1.300"><path d="M2 8h3l5-5v16l-5-5H2zM13.500 8l6 6M19.500 8l-6 6"/></svg>
  </div>
  <span class="flex w-[45px] items-center justify-center text-[15px] tracking-[-0.516px]">ENG</span>
  <div class="flex w-[85px] flex-col items-center text-[15px] leading-[23px] pt-[2px]"><span class="tracking-[-0.663px]">1:25 pm</span><span class="tracking-[-0.45px]">16/3/2023</span></div>
  <div class="flex w-[59px] items-center justify-center pt-[3px] pr-[2px]">
    <svg class="h-[32px] w-[32px]" viewBox="0 0 32 32"><path d="M1 2h20v17H11l-5 4v-4H1z" fill="#fff"/><path d="M4.500 6.500h13M4.500 10.500h13M4.500 14.500h13" stroke="#222" stroke-width="1.200"/><circle cx="21" cy="21.500" r="10" fill="#2e302f" stroke="#868886" stroke-width="1.200"/><text x="21" y="26.500" text-anchor="middle" font-size="14" font-weight="600" fill="#fff">3</text></svg>
  </div>
  <span class="ml-px h-full w-px bg-[#6b6d6b]"></span>
</footer>

<script>
  // Bar chart of pets2021: 5 units = 38.4px
  const yAt = v => 707 + (50 - v) * 7.68;
  let out = '<text x="949.500" y="667" text-anchor="middle" font-size="31" letter-spacing="-.2">pets2021</text>';
  for (let v = 50; v >= 0; v -= 5) {
    out += `<path d="M565 ${yAt(v)}H1366.500" stroke="#d9d9d9" stroke-width="1.800"/>`;
    out += `<text x="543.500" y="${yAt(v) + 7}" text-anchor="end" font-size="20" letter-spacing="-.5">${v}</text>`;
  }
  [47, 30, 13, 14].forEach((v, i) => {
    out += `<rect x="${604 + i * 114.6}" y="${yAt(v)}" width="36" height="${(v * 7.68)}" fill="#4472c4"/>`;
  });
  document.getElementById('chart').innerHTML = out;
</script>
</body>
</html>
